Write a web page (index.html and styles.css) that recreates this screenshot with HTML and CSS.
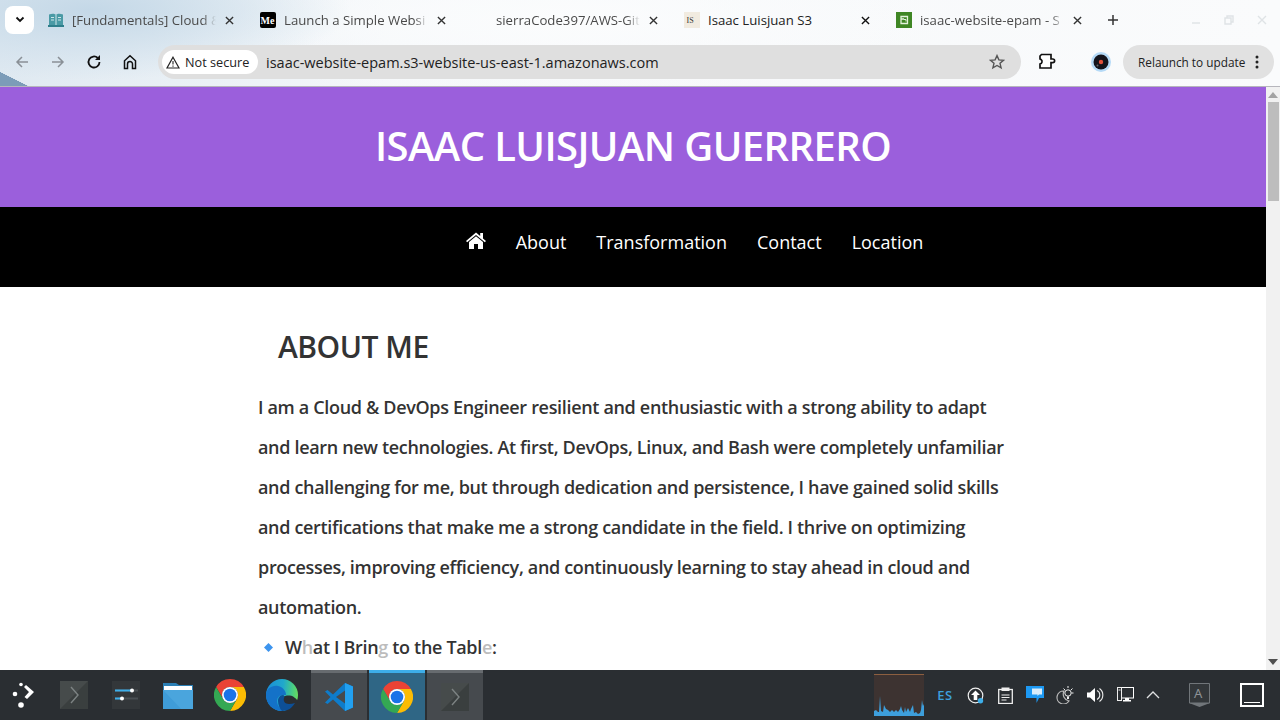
FILE: index.html
```html
<!DOCTYPE html>
<html lang="en">
<head>
<meta charset="utf-8">
<title>Isaac Luisjuan S3</title>
<link rel="stylesheet" href="styles.css">
</head>
<body>
<svg class="defs" width="0" height="0">
  <defs>
    <linearGradient id="edge" x1="0" y1="0.5" x2="1" y2="0.6">
      <stop offset="0" stop-color="#1a8fd8"/>
      <stop offset=".5" stop-color="#20a8cc"/>
      <stop offset=".85" stop-color="#4fd27a"/>
      <stop offset="1" stop-color="#6bdc5c"/>
    </linearGradient>
  </defs>
  <symbol id="chrome" viewBox="0 0 48 48">
    <path fill="#ea4335" d="M24 0A24 24 0 0 1 44.8 12H24a12 12 0 0 0-10.4 18L3.2 12A24 24 0 0 1 24 0z"/>
    <path fill="#fbbc04" d="M44.8 12A24 24 0 0 1 24 48L34.4 30A12 12 0 0 0 24 12z"/>
    <path fill="#34a853" d="M3.2 12A24 24 0 0 0 24 48L34.4 30A12 12 0 0 1 13.6 30z"/>
    <circle cx="24" cy="24" r="12" fill="#fff"/>
    <circle cx="24" cy="24" r="9.5" fill="#1a73e8"/>
  </symbol>
  <symbol id="term" viewBox="0 0 28 28">
    <rect width="28" height="28" fill="#3a3f3f"/>
    <path d="M0 28V0h28L0 28z" fill="#464b4b"/>
    <path d="M11 6l7 8-7 8" fill="none" stroke="#7d8383" stroke-width="1.4"/>
  </symbol>
  <symbol id="close" viewBox="0 0 10 10">
    <path d="M1 1l8 8M9 1L1 9" fill="none" stroke="currentColor" stroke-width="1.5"/>
  </symbol>
</svg>

<div class="chrome">
  <div class="tabstrip">
    <button class="tab-search"><svg width="10" height="8" viewBox="0 0 10 8"><path d="M1.5 1.5L5 5l3.5-3.5" fill="none" stroke="#111" stroke-width="1.8"/></svg></button>
    <div class="tab">
      <svg class="fav" viewBox="0 0 16 16"><path d="M1 2.500c3-1 5.500-1 7 .5 1.500-1.500 4-1.500 7-.5V13H1z" fill="#4a9aa5"/><path d="M8 3v10" stroke="#cfe6ea"/><path d="M3 5.500h3M3 8h3M10 5.500h3M10 8h3" stroke="#cfe6ea"/><rect y="13" width="16" height="2" fill="#2f7f8c"/></svg>
      <span class="tab-title dim">[Fundamentals] Cloud &amp;</span>
      <svg class="x"><use href="#close"/></svg>
    </div>
    <div class="tab">
      <svg class="fav" viewBox="0 0 16 16"><rect width="16" height="16" rx="2" fill="#000"/><text x="0.500" y="12" class="med">Me</text></svg>
      <span class="tab-title dim">Launch a Simple Websi</span>
      <svg class="x"><use href="#close"/></svg>
    </div>
    <div class="tab">
      <span class="fav"></span>
      <span class="tab-title dim">sierraCode397/AWS-Git</span>
      <svg class="x"><use href="#close"/></svg>
    </div>
    <div class="tab active">
      <svg class="fav" viewBox="0 0 16 16"><rect width="16" height="16" fill="#f1ebe0"/><text x="2.500" y="11" class="isf">IS</text></svg>
      <span class="tab-title">Isaac Luisjuan S3</span>
      <svg class="x"><use href="#close"/></svg>
    </div>
    <div class="tab">
      <svg class="fav" viewBox="0 0 16 16"><rect width="16" height="16" fill="#3f8624"/><path d="M5 4.500h6.500v7H5zM5 7h3" fill="none" stroke="#e4f2dc" stroke-width="1.3"/><path d="M8 7.500h2v2" fill="none" stroke="#e4f2dc"/></svg>
      <span class="tab-title dim">isaac-website-epam - S</span>
      <svg class="x"><use href="#close"/></svg>
    </div>
    <svg class="newtab" width="12" height="12" viewBox="0 0 12 12"><path d="M6 1v10M1 6h10" stroke="#333" stroke-width="1.5"/></svg>
    <div class="winctl">
      <svg width="10" height="10" viewBox="0 0 10 10"><path d="M1 8h8" stroke="#dfe3e6" stroke-width="1.4"/></svg>
      <svg width="10" height="10" viewBox="0 0 10 10"><path d="M1 3h6v6H1zM3 3V1h6v6H7" fill="none" stroke="#dfe3e6" stroke-width="1.4"/></svg>
      <svg width="10" height="10" viewBox="0 0 10 10"><path d="M1 1l8 8M9 1L1 9" stroke="#dfe3e6" stroke-width="1.4"/></svg>
    </div>
  </div>
  <div class="toolbar">
    <div class="navbtns">
      <svg class="tb" viewBox="0 0 16 16"><path d="M14 8H3M8 3L3 8l5 5" fill="none" stroke="#8a9096" stroke-width="1.5"/></svg>
      <svg class="tb" viewBox="0 0 16 16"><path d="M2 8h11M8 3l5 5-5 5" fill="none" stroke="#8a9096" stroke-width="1.5"/></svg>
      <svg class="tb" viewBox="0 0 16 16"><path d="M13.500 8a5.500 5.500 0 1 1-1.700-4" fill="none" stroke="#111" stroke-width="1.800"/><path d="M14 1v5H9z" fill="#111"/></svg>
      <svg class="tb" viewBox="0 0 16 16"><path d="M2.500 14.500V6.800L8 1.800l5.500 5v7.700h-3V10a2.500 2.500 0 0 0-5 0v4.500z" fill="none" stroke="#111" stroke-width="1.500"/></svg>
    </div>
    <div class="omnibox">
      <span class="secure">
        <svg width="14" height="13" viewBox="0 0 14 13"><path d="M7 1.200L13 12H1z" fill="none" stroke="#222" stroke-width="1.200"/><path d="M7 5v3.600M7 9.600v1.200" stroke="#222" stroke-width="1.100"/></svg>
        Not secure
      </span>
      <span class="url">isaac-website-epam.s3-website-us-east-1.amazonaws.com</span>
      <svg class="star" width="16" height="16" viewBox="0 0 16 16"><path d="M8 1.600l1.900 4.300 4.600.4-3.500 3 1.100 4.600L8 11.500l-4.100 2.400L5 9.300l-3.500-3 4.600-.4z" fill="none" stroke="#555" stroke-width="1.400"/></svg>
    </div>
    <svg class="puzzle" width="18" height="18" viewBox="0 0 18 18"><path d="M3.500 1.500H13V6h1.800a1.800 1.800 0 0 1 0 3.600H13v5.400H2V11a2.500 2.500 0 0 0 1-4.500L2 6V3z" fill="#fff" stroke="#111" stroke-width="1.700"/></svg>
    <svg class="avatar" width="20" height="20" viewBox="0 0 20 20"><circle cx="10" cy="10" r="10" fill="#b5daf7"/><circle cx="10" cy="10" r="7.500" fill="#14141c"/><circle cx="10" cy="10" r="2.200" fill="#e2503a"/><circle cx="6.500" cy="13.500" r="1" fill="#666"/></svg>
    <div class="relaunch"><span>Relaunch to update</span><svg width="4" height="14" viewBox="0 0 4 14"><circle cx="2" cy="2" r="1.500" fill="#222"/><circle cx="2" cy="7" r="1.500" fill="#222"/><circle cx="2" cy="12" r="1.500" fill="#222"/></svg></div>
  </div>
</div>

<div class="viewport">
  <div class="page">
    <header class="site-head"><h1>ISAAC LUISJUAN GUERRERO</h1></header>
    <nav class="site-nav">
      <a class="home-link" aria-label="Home"><svg width="20" height="17" viewBox="0 0 20 17"><path d="M10 0.500L0 9l1.200 1.300L10 3l8.800 7.300L20 9l-3-2.600V1h-2.800v3L10 .5z" fill="#fff"/><path d="M10 4.300L3 10v7h5v-5h4v5h5v-7z" fill="#fff"/></svg></a>
      <a>About</a>
      <a>Transformation</a>
      <a>Contact</a>
      <a>Location</a>
    </nav>
    <main class="content">
      <h2>ABOUT ME</h2>
      <p>I am a Cloud &amp; DevOps Engineer resilient and enthusiastic with a strong ability to adapt and learn new technologies. At first, DevOps, Linux, and Bash were completely unfamiliar and challenging for me, but through dedication and persistence, I have gained solid skills and certifications that make me a strong candidate in the field. I thrive on optimizing processes, improving efficiency, and continuously learning to stay ahead in cloud and automation.</p>
      <p class="bring"><svg width="9" height="9" viewBox="0 0 9 9"><path d="M4.500 0L9 4.500 4.500 9 0 4.500z" fill="#3d94ee"/></svg><span>W<i>h</i>at I Brin<i>g</i> to the Tabl<i>e</i>:</span></p>
    </main>
  </div>
  <div class="scrollbar">
    <svg width="10" height="6" viewBox="0 0 10 6"><path d="M5 0l5 6H0z" fill="#a3a3a3"/></svg>
    <div class="thumb"></div>
    <svg class="down" width="10" height="6" viewBox="0 0 10 6"><path d="M5 6L0 0h10z" fill="#505050"/></svg>
  </div>
</div>

<div class="taskbar">
  <div class="tasks">
    <div class="task launcher"><svg width="26" height="26" viewBox="0 0 26 26"><circle cx="9" cy="2.500" r="1.800" fill="#fff"/><circle cx="3" cy="12" r="2.300" fill="#fff"/><circle cx="9" cy="23" r="2.800" fill="#fff"/><path d="M14 3l8 7-7 7-2.500-2 4.500-5-5-5z" fill="#fff"/></svg></div>
    <div class="task pager"><svg width="28" height="28"><use href="#term"/></svg></div>
    <div class="task"><svg width="28" height="28" viewBox="0 0 28 28"><rect width="28" height="28" fill="#33373a"/><path d="M3 9.500h23M3 17.500h23" stroke="#4b5054" stroke-width="2"/><path d="M3 9.500h17M3 17.500h7" stroke="#3daee9" stroke-width="2"/><circle cx="20" cy="9.500" r="2" fill="#fff"/><circle cx="10" cy="17.500" r="2" fill="#fff"/></svg></div>
    <div class="task"><svg width="30" height="28" viewBox="0 0 30 28"><path d="M0 2h13l3 2h14v24H0z" fill="#2b7fb5"/><rect x="1" y="5" width="28" height="5" fill="#fff"/><path d="M0 9h30v19H0z" fill="#3f9cd8"/><path d="M0 9h30v19H18z" fill="#56aee2" opacity=".5"/></svg></div>
    <div class="task"><svg width="32" height="32"><use href="#chrome"/></svg></div>
    <div class="task"><svg width="32" height="32" viewBox="0 0 32 32"><circle cx="16" cy="16" r="16" fill="url(#edge)"/><path d="M17 18c2-2 8-2 10-.500 2 1.500 5 3 5 6.500v8H20c-4-2-5-9-3-14z" fill="#2a2e32"/><path d="M0 16c0-6 6-10 12-9 5 1 8 5 8 9h-3c-4 0-6 3-6 6 0 5 4 9 9 9l-4 1C7 32 0 25 0 16z" fill="#1472c8"/><path d="M12 22c0-3 2-6 5-6 1 0 2 2 1 3-1 3 1 6 5 6 2 0 4-.5 6-1-3 5-7 8-13 8-2-2-4-6-4-10z" fill="#0d4f96"/></svg></div>
    <div class="task win vs"><svg width="28" height="28" viewBox="0 0 28 28"><path d="M20 0l8 3.500v21L20 28 8 16.500 2.500 21 0 19.500 5.500 14 0 8.500 2.500 7 8 11.500z" fill="#0e7ccb"/><path d="M20 7.500L11 14l9 6.500z" fill="#464a4e"/><path d="M20 0l8 3.500v21L20 28z" fill="#22a0f0"/></svg></div>
    <div class="task win act"><svg width="32" height="32"><use href="#chrome"/></svg></div>
    <div class="task win"><svg width="28" height="28"><use href="#term"/></svg></div>
  </div>
  <div class="tray">
    <svg class="graph" width="50" height="42" viewBox="0 0 50 42"><rect width="50" height="42" fill="#3d3331"/><rect width="50" height="1" fill="#8c5f40"/><path d="M0 42V37L2 36 4 38 5 38 6 22 7 37 9 38 10 31 12 35 14 36 16 38 18 36 20 38 22 36 24 38 26 35 27 32 28 36 30 39 31 33 32 38 34 34 36 38 37 35 39 31 40 39 42 38 44 40 46 39 47 36 48 26 49 32 50 30V42z" fill="#3d9fdc"/></svg>
    <span class="lang">ES</span>
    <span class="ti"><svg width="17" height="17" viewBox="0 0 17 17"><circle cx="8.500" cy="8.500" r="7.300" fill="none" stroke="#eee" stroke-width="1.200"/><path d="M8.500 3.500L13 8h-2.700v5H6.700V8H4z" fill="#fff"/><circle cx="13.500" cy="13.800" r="2.700" fill="#3daee9"/></svg></span>
    <span class="ti"><svg width="15" height="17" viewBox="0 0 15 17"><rect x=".7" y="2.500" width="13.600" height="14" fill="none" stroke="#eee" stroke-width="1.300"/><rect x="3.500" y="0.500" width="8" height="3.500" fill="#eee"/><path d="M3.500 8h8M3.500 10.500h8M3.500 13h5" stroke="#eee"/></svg></span>
    <span class="ti"><svg width="18" height="18" viewBox="0 0 18 18"><path d="M0 0h18v12h-5l-2.500 5V12H0z" fill="#1d99f3"/><path d="M6 2.500h10v6h-3l-1.500 1.500V8.500H6z" fill="#d8ecfa"/></svg></span>
    <span class="ti"><svg width="18" height="18" viewBox="0 0 18 18"><path d="M8 5a6.500 6.500 0 1 0 5 10A7 7 0 0 1 8 5z" fill="none" stroke="#bbb" stroke-width="1.200"/><circle cx="12" cy="7" r="3.200" fill="none" stroke="#eee"/><path d="M11 10.500h2v2.500h-2z" fill="#eee"/><path d="M12 0v2M16.500 2.500l-1.500 1.500M7.500 2.500L9 4M17.500 7h-2" stroke="#eee"/></svg></span>
    <span class="ti"><svg width="17" height="14" viewBox="0 0 17 14"><path d="M0 4.500h3L8 0v14L3 9.500H0z" fill="#fff"/><path d="M10 2.500a5 5 0 0 1 0 9M12.500 .5a8 8 0 0 1 0 13" fill="none" stroke="#eee" stroke-width="1.100"/></svg></span>
    <span class="ti"><svg width="17" height="16" viewBox="0 0 17 16"><rect x="3.500" y=".5" width="13" height="10.500" fill="#2b2f33" stroke="#fff"/><rect x=".5" y=".5" width="4" height="13" fill="#2b2f33" stroke="#eee"/><path d="M1.500 3h2" stroke="#eee"/><rect x="8" y="11" width="4" height="2" fill="#fff"/><rect x="6" y="13" width="8" height="1.500" fill="#fff"/></svg></span>
    <span class="ti caret"><svg width="14" height="8" viewBox="0 0 14 8"><path d="M1 7l6-6 6 6" fill="none" stroke="#dfe1e2" stroke-width="1.300"/></svg></span>
    <span class="ti kb"><svg width="21" height="24" viewBox="0 0 21 24"><path d="M.5.500h20V20H.5z" fill="#33373a" stroke="#71767a"/><path d="M0 20h21l-10.500 4z" fill="#71767a"/><text x="5" y="14.500" class="kbt">A</text></svg></span>
    <span class="desktop"><i></i></span>
  </div>
</div>
</body>
</html>
```

FILE: styles.css
```css
* { box-sizing: border-box; }
html, body { margin: 0; height: 100%; }
body {
  width: 1280px;
  height: 720px;
  overflow: hidden;
  display: flex;
  flex-direction: column;
  font-family: "Open Sans", "Noto Sans", sans-serif;
  background: #fff;
}
.defs { position: absolute; }

.chrome {
  height: 87px;
  flex: none;
  border-bottom: 1px solid #b6b6bc;
  background:
    linear-gradient(to top right, #7c9cb8 50%, transparent 51%) 0 100% / 28px 14px no-repeat,
    radial-gradient(260px 70px at 90px 10px, #c4d8e7 0, rgba(205,222,235,.55) 60%, transparent),
    radial-gradient(420px 80px at 560px 20px, #fbfcfd, transparent),
    linear-gradient(90deg, #dfe9f1 0, #f5f8fa 30%, #fafbfc 100%);
}
.tabstrip { display: flex; align-items: center; height: 40px; padding-left: 5px; }
.tab-search {
  width: 29px; height: 28px;
  border: 0; border-radius: 8px; background: #fff;
  display: flex; align-items: center; justify-content: center; padding: 0;
  margin-right: 2px;
}
.tab { width: 212px; height: 40px; display: flex; align-items: center; padding-left: 12px; flex: none; }
.fav { width: 16px; height: 16px; flex: none; }
.tab-title {
  width: 150px; margin-left: 8px; font-size: 13.2px; color: #222;
  white-space: nowrap;
}
.tab-title.dim {
  color: #4a4a4a;
  -webkit-mask-image: linear-gradient(90deg, #000 87%, transparent 96%);
  mask-image: linear-gradient(90deg, #000 87%, transparent 96%);
}
.x { width: 9px; height: 9px; margin-left: 3px; color: #333; flex: none; }
.active .x { color: #111; }
.med { font-family: "Liberation Serif", serif; font-weight: 700; font-size: 10px; fill: #fff; }
.isf { font-family: "Liberation Serif", serif; font-size: 8px; fill: #333; }
.newtab { margin-left: 11px; flex: none; }
.winctl { display: flex; gap: 23px; margin-left: 72px; }

.toolbar { display: flex; align-items: center; height: 46px; padding: 0 6px 2px 0; }
.navbtns { display: flex; gap: 20px; padding-left: 14px; width: 158px; flex: none; }
.tb { width: 16px; height: 16px; flex: none; }
.omnibox {
  width: 863px; height: 34px; flex: none;
  display: flex; align-items: center;
  background: #dfdfdf; border-radius: 17px; padding: 0 16px 0 4px;
}
.secure {
  height: 24px; width: 96px; border-radius: 12px; background: #fff;
  display: flex; align-items: center; gap: 5px; padding-left: 4px;
  font-size: 12.7px; color: #222; flex: none;
}
.url { margin-left: 8px; font-size: 14.5px; color: #222; flex: 1; white-space: nowrap; }
.puzzle { margin-left: 17px; flex: none; }
.avatar { margin-left: 35px; flex: none; }
.relaunch {
  margin-left: 12px; width: 151px; height: 34px; border-radius: 17px; background: #e1e1e1;
  display: flex; align-items: center; justify-content: space-between;
  padding: 0 15px 0 15px; font-size: 11.8px; color: #222; flex: none;
}

.viewport { flex: 1; display: flex; min-height: 0; background: #fff; }
.page { flex: 1; min-width: 0; overflow: hidden; }
.site-head {
  height: 120px; background: #9b5fdc; color: #fff;
  display: flex; align-items: center; justify-content: center; padding-bottom: 4px;
}
.site-head h1 { margin: 0; font-size: 40px; font-weight: 600; letter-spacing: -.6px; }
.site-nav {
  height: 80px; background: #000;
  display: flex; justify-content: center; align-items: center; gap: 30px;
  padding: 0 0 11px 123px;
}
.site-nav a { color: #fff; font-size: 18px; }
.home-link { display: flex; margin-bottom: 3px; }
.content { width: 750px; margin: 0 auto; color: #333; }
.content h2 { margin: 0; padding: 39px 0 0 20px; height: 100px; font-size: 30px; line-height: 42px; font-weight: 600; letter-spacing: -.5px; }
.content p { margin: 0; font-size: 18px; line-height: 40px; font-weight: 600; letter-spacing: -.33px; }
.bring { display: flex; align-items: center; padding-left: 6px; }
.bring svg { margin-right: 12px; flex: none; }
.bring i { font-style: normal; color: #bcbcbc; }

.scrollbar {
  width: 14px; flex: none; background: #f1f1f1;
  display: flex; flex-direction: column; align-items: center; padding: 5px 0;
}
.thumb { width: 11px; height: 99px; background: #bdbdbd; margin-top: 4px; }
.down { margin-top: auto; }

.taskbar {
  height: 50px; flex: none; background: #2a2e32;
  display: flex; justify-content: space-between; align-items: stretch;
}
.tasks { display: flex; }
.task { width: 52px; display: flex; align-items: center; justify-content: center; flex: none; }
.launcher { width: 50px; }
.pager { width: 47px; margin-right: 3px; }
.win {
  width: 56px; background: #464a4e; border-top: 3px solid #676b6f; margin-right: 2px;
}
.vs { margin-left: 3px; }
.act { background: #2f6685; border-top-color: #3daee9; }
.tray { display: flex; align-items: center; padding-right: 16px; }
.graph { margin-right: 6px; flex: none; }
.lang { width: 30px; text-align: center; color: #3d9fdc; font-size: 13px; font-weight: 600; letter-spacing: .5px; }
.ti { width: 30px; display: flex; align-items: center; justify-content: center; flex: none; }
.caret { width: 26px; }
.kb { width: 66px; }
.kbt { font-family: "Noto Sans", sans-serif; font-size: 13px; fill: #8e9397; }
.desktop { width: 24px; height: 24px; border: 2px solid #fff; display: flex; align-items: flex-end; padding: 0 2px 2px; margin-left: 8px; }
.desktop i { display: block; height: 1px; width: 100%; background: #fff; }
```
